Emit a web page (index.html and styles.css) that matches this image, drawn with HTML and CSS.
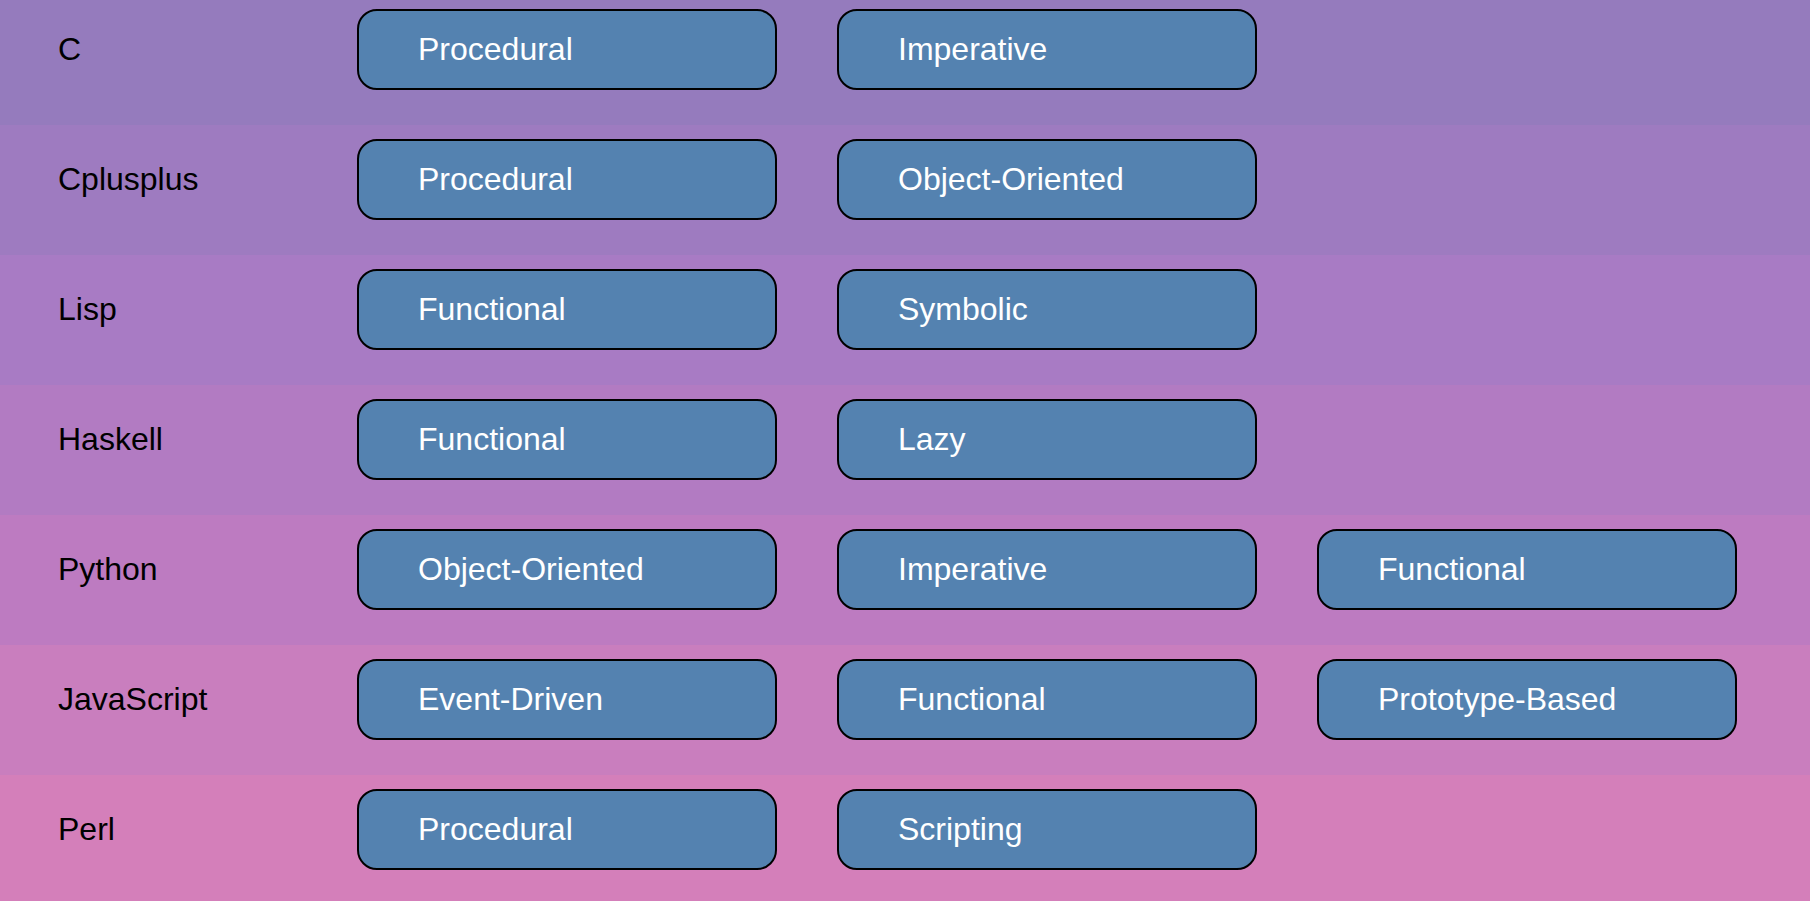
FILE: index.html
```html
<!DOCTYPE html>
<html lang="en">
<head>
<meta charset="utf-8">
<title>Languages</title>
<link rel="stylesheet" href="styles.css">
</head>
<body>
<main class="list">
  <section class="row r1">
    <div class="name">C</div>
    <div class="tags"><div class="tag">Procedural</div><div class="tag">Imperative</div></div>
  </section>
  <section class="row r2">
    <div class="name">Cplusplus</div>
    <div class="tags"><div class="tag">Procedural</div><div class="tag">Object-Oriented</div></div>
  </section>
  <section class="row r3">
    <div class="name">Lisp</div>
    <div class="tags"><div class="tag">Functional</div><div class="tag">Symbolic</div></div>
  </section>
  <section class="row r4">
    <div class="name">Haskell</div>
    <div class="tags"><div class="tag">Functional</div><div class="tag">Lazy</div></div>
  </section>
  <section class="row r5">
    <div class="name">Python</div>
    <div class="tags"><div class="tag">Object-Oriented</div><div class="tag">Imperative</div><div class="tag">Functional</div></div>
  </section>
  <section class="row r6">
    <div class="name">JavaScript</div>
    <div class="tags"><div class="tag">Event-Driven</div><div class="tag">Functional</div><div class="tag">Prototype-Based</div></div>
  </section>
  <section class="row r7">
    <div class="name">Perl</div>
    <div class="tags"><div class="tag">Procedural</div><div class="tag">Scripting</div></div>
  </section>
</main>
</body>
</html>
```

FILE: styles.css
```css
html, body {
  margin: 0;
  padding: 0;
  overflow: hidden;
  background: #d47fba;
}

body {
  font-family: "Liberation Sans", Arial, sans-serif;
  font-size: 32px;
  color: #000;
}

.list {
  display: flex;
  flex-direction: column;
  margin-top: -5px;
}

.row {
  display: flex;
  align-items: center;
  box-sizing: border-box;
  height: 130px;
  padding: 14px 0 35px 58px;
}

.r1 { background: #957bbd; }
.r2 { background: #9e7bc0; }
.r3 { background: #a87bc4; }
.r4 { background: #b27bc2; }
.r5 { background: #bd7bc1; }
.r6 { background: #c97ebe; }
.r7 { background: #d47fba; }

.name {
  width: 299px;
  flex: none;
}

.tags {
  display: flex;
  gap: 60px;
}

.tag {
  box-sizing: border-box;
  width: 420px;
  padding: 20px 56px 20px 59px;
  border: 2px solid #000;
  border-radius: 20px;
  background: #5482b0;
  color: #fff;
  white-space: nowrap;
}
```
